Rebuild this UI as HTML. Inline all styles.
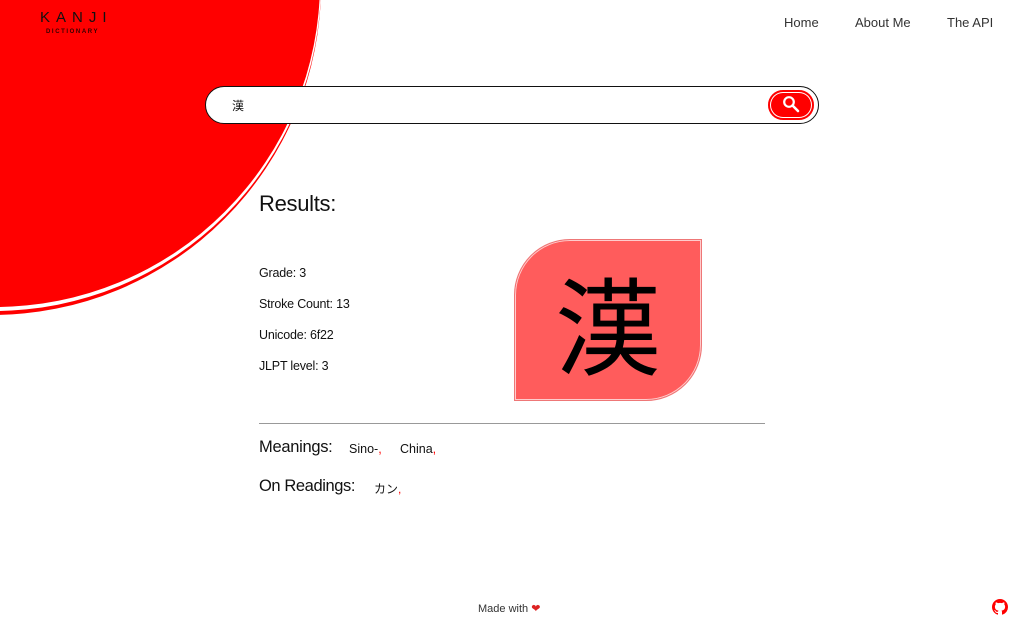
<!DOCTYPE html>
<html><head><meta charset="utf-8"><style>
*{margin:0;padding:0;box-sizing:border-box}
html,body{width:1024px;height:624px;overflow:hidden;background:#fff;font-family:"Liberation Sans","Noto Sans CJK JP",sans-serif;color:#111;position:relative}
.abs{position:absolute}
.nav{font-size:13px;color:#333;top:15px}
.info{left:259px;font-size:12.5px;color:#111;letter-spacing:-0.2px}
</style></head><body>
<svg class="abs" style="left:0;top:0" width="1024" height="624">
<circle cx="-8" cy="-14" r="329" fill="#f00"/>
<circle cx="-6" cy="-16" r="327" fill="#fff"/>
<circle cx="-5" cy="-18" r="325" fill="#f00"/>
</svg>
<div class="abs" style="left:40px;top:9px;font-size:15px;letter-spacing:6px;color:#111">KANJI</div>
<div class="abs" style="left:46px;top:29px;font-size:6px;letter-spacing:1.6px;color:#300;font-weight:bold">DICTIONARY</div>
<div class="abs nav" style="left:784px">Home</div>
<div class="abs nav" style="left:855px">About Me</div>
<div class="abs nav" style="left:947px">The API</div>
<div class="abs" style="left:205px;top:86px;width:614px;height:38px;border:1.3px solid #111;border-radius:19px;background:#fff"></div>
<div class="abs" style="left:232px;top:97px;font-size:12px">漢</div>
<div class="abs" style="left:768px;top:90px;width:46px;height:30px;border-radius:15px;background:#f00;box-shadow:inset 0 0 0 2px #f00,inset 0 0 0 3px #fff"></div>
<svg class="abs" style="left:782px;top:95px" width="18" height="18" viewBox="0 0 18 18"><circle cx="7" cy="7" r="4.8" fill="none" stroke="#fff" stroke-width="2.2"/><line x1="10.5" y1="10.5" x2="16" y2="16" stroke="#fff" stroke-width="2.6" stroke-linecap="round"/></svg>
<div class="abs" style="left:259px;top:191px;font-size:22px;color:#111;letter-spacing:-0.3px">Results:</div>
<div class="abs info" style="top:266px">Grade: 3</div>
<div class="abs info" style="top:297px">Stroke Count: 13</div>
<div class="abs info" style="top:328px">Unicode: 6f22</div>
<div class="abs info" style="top:359px">JLPT level: 3</div>
<div class="abs" style="left:514px;top:239px;width:188px;height:162px;background:#ff5c5c;border:1px solid #e77;border-radius:56px 0 56px 0;box-shadow:inset 0 0 0 1px #fcc"></div>
<div class="abs" style="left:514px;top:257px;width:188px;text-align:center;font-size:106px;line-height:128px;font-family:'Noto Sans CJK JP',sans-serif;color:#000">漢</div>
<div class="abs" style="left:259px;top:423px;width:506px;height:1px;background:#999"></div>
<div class="abs" style="left:259px;top:438px;font-size:16.5px;letter-spacing:-0.3px">Meanings:</div>
<div class="abs" style="left:349px;top:442px;font-size:12.5px">Sino-<span style="color:#f00">,</span></div>
<div class="abs" style="left:400px;top:442px;font-size:12.5px">China<span style="color:#f00">,</span></div>
<div class="abs" style="left:259px;top:477px;font-size:16.5px;letter-spacing:-0.4px">On Readings:</div>
<div class="abs" style="left:374px;top:480px;font-size:12px">カン<span style="color:#f00">,</span></div>
<div class="abs" style="left:478px;top:602px;font-size:11px;color:#333">Made with <span style="color:#d22">❤</span></div>
<svg class="abs" style="left:992px;top:599px" width="16" height="16" viewBox="0 0 16 16"><path fill="#f00" d="M8 0C3.58 0 0 3.580 0 8c0 3.54 2.290 6.530 5.470 7.590.4.07.55-.17.55-.38v-1.330c-2.230.48-2.700-1.070-2.700-1.070-.36-.92-.89-1.170-.89-1.170-.73-.5.06-.49.06-.49.8.06 1.230.83 1.230.83.71 1.220 1.870.87 2.330.66.07-.52.28-.87.5-1.070-1.780-.2-3.640-.89-3.640-3.950 0-.87.31-1.590.82-2.150-.08-.2-.36-1.020.08-2.120 0 0 .67-.21 2.200.82a7.600 7.600 0 0 1 4 0c1.530-1.040 2.200-.82 2.200-.82.44 1.100.16 1.920.08 2.120.51.56.82 1.270.82 2.150 0 3.070-1.870 3.750-3.650 3.950.29.25.54.73.54 1.480v2.200c0 .21.15.46.55.38A8.010 8.010 0 0 0 16 8c0-4.420-3.580-8-8-8z"/></svg>
</body></html>
